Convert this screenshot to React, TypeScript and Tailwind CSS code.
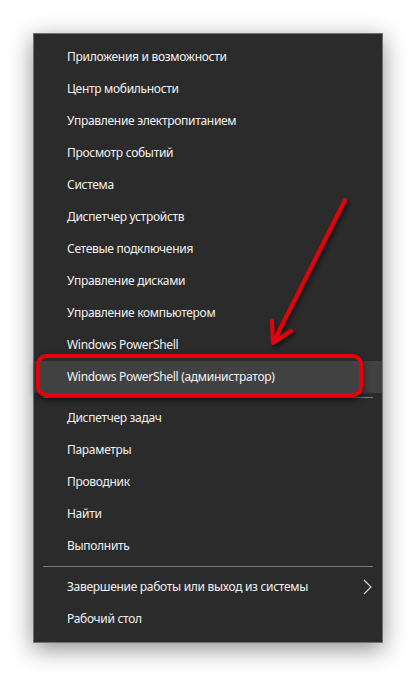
import React from "react";

const groupA = [
  "Приложения и возможности",
  "Центр мобильности",
  "Управление электропитанием",
  "Просмотр событий",
  "Система",
  "Диспетчер устройств",
  "Сетевые подключения",
  "Управление дисками",
  "Управление компьютером",
  "Windows PowerShell",
  "Windows PowerShell (администратор)",
];

const groupB = ["Диспетчер задач", "Параметры", "Проводник", "Найти", "Выполнить"];

const Item = ({ label, active, sub }: { label: string; active?: boolean; sub?: boolean }) => (
  <div
    className={`flex items-center justify-between h-8 pl-[33px] pr-[9px] text-[12px] tracking-[-0.3px] text-[#f2f2f2] ${
      active ? "bg-[#414141]" : ""
    }`}
  >
    <span>{label}</span>
    {sub && (
      <svg width="9" height="16" viewBox="0 0 9 16" className="mr-[1px]">
        <path d="M1 1 L8 8 L1 15" fill="none" stroke="#d8d8d8" strokeWidth="1.2" />
      </svg>
    )}
  </div>
);

const Separator = () => <div className="my-[4px] mx-[9px] h-px bg-[#7a7a7a]" />;

export default function App() {
  return (
    <div
      className="relative w-[417px] h-[676px] bg-white pt-[33px] pl-[33px]"
      style={{ fontFamily: '"Noto Sans", "Open Sans", sans-serif' }}
    >
      <div className="w-[350px] bg-[#2b2b2b] border border-[#6e6e6e] py-[7px] shadow-[0_6px_22px_rgba(0,0,0,0.45)]">
        {groupA.map((l, i) => (
          <Item key={l} label={l} active={i === groupA.length - 1} />
        ))}
        <Separator />
        {groupB.map((l) => (
          <Item key={l} label={l} />
        ))}
        <Separator />
        <Item label="Завершение работы или выход из системы" sub />
        <Item label="Рабочий стол" />
      </div>

      {/* highlight frame */}
      <div className="absolute left-[36px] top-[354px] w-[327px] h-[43px] border-4 border-[#e5000a] rounded-[10px] shadow-[0_3px_6px_rgba(0,0,0,0.6)]" />

      {/* arrow */}
      <svg className="absolute left-0 top-0" width="417" height="676" viewBox="0 0 417 676">
        <defs>
          <filter id="sh" x="-20%" y="-20%" width="140%" height="140%">
            <feDropShadow dx="2" dy="3" stdDeviation="2" floodColor="#000" floodOpacity="0.6" />
          </filter>
        </defs>
        <g filter="url(#sh)" stroke="#e5000a" strokeWidth="4" strokeLinecap="round" strokeLinejoin="round" fill="none">
          <line x1="345" y1="200" x2="274" y2="341" />
          <polyline points="272,321 273,343 291,331" />
        </g>
      </svg>
    </div>
  );
}
